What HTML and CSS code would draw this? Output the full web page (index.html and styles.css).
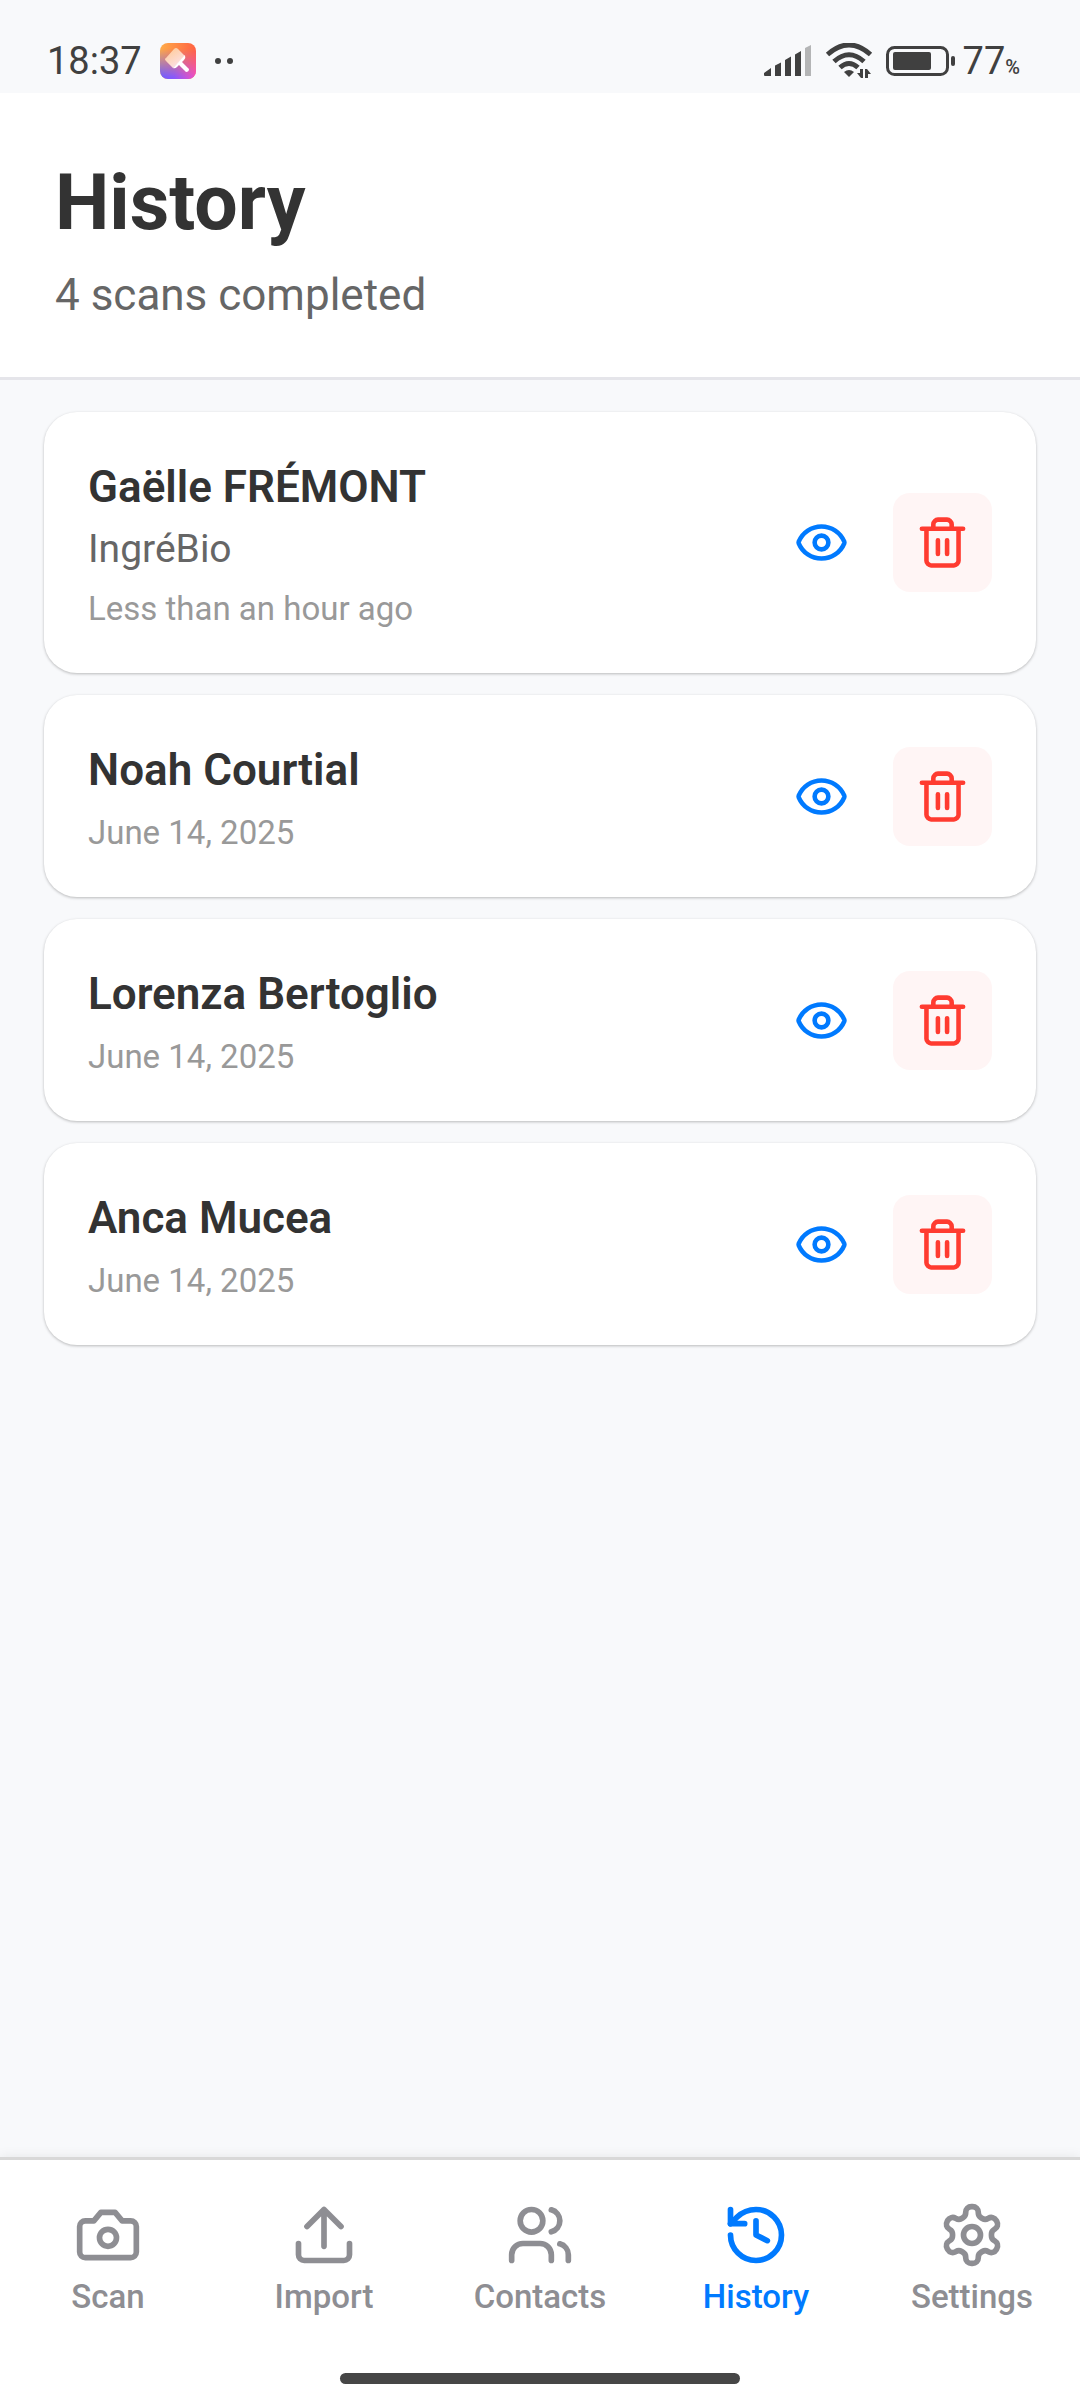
FILE: index.html
```html
<!DOCTYPE html>
<html lang="en">
<head>
    <meta charset="UTF-8">
    <meta name="viewport" content="width=device-width, initial-scale=1.0">
    <title>History</title>
    <link rel="stylesheet" href="styles.css">
</head>
<body>
    <!-- shared icons -->
    <svg class="sprite" aria-hidden="true">
        <symbol id="eye" viewBox="0 0 24 24">
            <path d="M2.062 12.348a1 1 0 0 1 0-.696 10.75 10.75 0 0 1 19.876 0 1 1 0 0 1 0 .696 10.75 10.75 0 0 1-19.876 0"/>
            <circle cx="12" cy="12" r="3"/>
        </symbol>
        <symbol id="trash" viewBox="0 0 24 24">
            <path d="M3 6h18M19 6v14c0 1-1 2-2 2H7c-1 0-2-1-2-2V6M8 6V4c0-1 1-2 2-2h4c1 0 2 1 2 2v2M10 11v6M14 11v6"/>
        </symbol>
    </svg>

    <div class="status-bar">
        <div class="status-left">
            <span>18:37</span>
            <svg class="app-badge" viewBox="0 0 36 36">
                <defs>
                    <linearGradient id="badgeTop" x1="0" y1="0" x2="1" y2="0">
                        <stop offset="0" stop-color="#ffac48"/>
                        <stop offset="1" stop-color="#ff6242"/>
                    </linearGradient>
                    <linearGradient id="badgeBottom" x1="0" y1="0" x2="1" y2="0">
                        <stop offset="0" stop-color="#6f5cff"/>
                        <stop offset="0.4" stop-color="#8a58fa"/>
                        <stop offset="1" stop-color="#f24fc4"/>
                    </linearGradient>
                    <linearGradient id="badgeFade" x1="0" y1="0" x2="0" y2="1">
                        <stop offset="0.15" stop-color="#000"/>
                        <stop offset="0.95" stop-color="#fff"/>
                    </linearGradient>
                    <linearGradient id="brush" x1="0.2" y1="0" x2="0.8" y2="1">
                        <stop offset="0" stop-color="#ffcb98"/>
                        <stop offset="1" stop-color="#fbe3f0"/>
                    </linearGradient>
                    <mask id="badgeMask">
                        <rect width="36" height="36" fill="url(#badgeFade)"/>
                    </mask>
                </defs>
                <rect width="36" height="36" rx="8" fill="url(#badgeTop)"/>
                <rect width="36" height="36" rx="8" fill="url(#badgeBottom)" mask="url(#badgeMask)"/>
                <path d="M6 15L14 6Q16 4 18 6L25 13L13 25L6 18Q4 16 6 15Z" fill="url(#brush)"/>
                <path d="M13 25L25 12Q26 15 24 17L22 19L29 26Q29 29 26 29L19 22L17 24Q15 26 13 25Z" fill="#fff"/>
            </svg>
            <svg class="dots" viewBox="0 0 20 8">
                <circle cx="4" cy="4" r="3"/>
                <circle cx="16" cy="4" r="3"/>
            </svg>
        </div>
        <div class="status-right">
            <svg class="signal" viewBox="0 0 48 32">
                <path d="M0 28L7 23V31H1Q0 31 0 30ZM11 20.500L17 17.500V31H11ZM21 15L27 11.500V31H21ZM31 9.500L37 6V31H31Z"/>
                <path class="signal-off" d="M41 3L47 0V31H41Z"/>
            </svg>
            <svg class="wifi" viewBox="0 0 48 36">
                <path class="arc" d="M2.500 11.500Q24 -7.500 45.500 11.500"/>
                <path class="arc" d="M9 18.500Q24 5 39 18.500"/>
                <path class="arc" d="M15 24.500Q24 16.500 33 24.500"/>
                <path d="M19 29Q24 25 29 29L24 34Z"/>
                <path d="M32 30H35V26H38V35H36ZM40 35V26H42L46 31H43V35Z"/>
            </svg>
            <svg class="battery" viewBox="0 0 70 30">
                <rect class="battery-shell" x="1.500" y="1.500" width="60" height="27" rx="7"/>
                <rect x="7" y="6" width="38" height="18" rx="2"/>
                <rect x="65" y="10" width="4" height="10" rx="2"/>
            </svg>
            <span>77<small>%</small></span>
        </div>
    </div>

    <header class="header">
        <h1>History</h1>
        <p>4 scans completed</p>
    </header>

    <main class="list">
        <article class="card">
            <div class="info">
                <h2>Gaëlle FRÉMONT</h2>
                <p class="company">IngréBio</p>
                <p class="date">Less than an hour ago</p>
            </div>
            <button type="button" class="action view" aria-label="View Gaëlle FRÉMONT"><svg><use href="#eye"/></svg></button>
            <button type="button" class="action delete" aria-label="Delete Gaëlle FRÉMONT"><svg><use href="#trash"/></svg></button>
        </article>

        <article class="card">
            <div class="info">
                <h2>Noah Courtial</h2>
                <p class="date">June 14, 2025</p>
            </div>
            <button type="button" class="action view" aria-label="View Noah Courtial"><svg><use href="#eye"/></svg></button>
            <button type="button" class="action delete" aria-label="Delete Noah Courtial"><svg><use href="#trash"/></svg></button>
        </article>

        <article class="card">
            <div class="info">
                <h2>Lorenza Bertoglio</h2>
                <p class="date">June 14, 2025</p>
            </div>
            <button type="button" class="action view" aria-label="View Lorenza Bertoglio"><svg><use href="#eye"/></svg></button>
            <button type="button" class="action delete" aria-label="Delete Lorenza Bertoglio"><svg><use href="#trash"/></svg></button>
        </article>

        <article class="card">
            <div class="info">
                <h2>Anca Mucea</h2>
                <p class="date">June 14, 2025</p>
            </div>
            <button type="button" class="action view" aria-label="View Anca Mucea"><svg><use href="#eye"/></svg></button>
            <button type="button" class="action delete" aria-label="Delete Anca Mucea"><svg><use href="#trash"/></svg></button>
        </article>
    </main>

    <footer class="bottom">
        <nav class="tabs">
            <a href="#scan" class="tab">
                <svg viewBox="0 0 24 24">
                    <path d="M14.5 4h-5L7 7H4a2 2 0 0 0-2 2v9a2 2 0 0 0 2 2h16a2 2 0 0 0 2-2V9a2 2 0 0 0-2-2h-3l-2.500-3z"/>
                    <circle cx="12" cy="13" r="3"/>
                </svg>
                <span>Scan</span>
            </a>
            <a href="#import" class="tab">
                <svg viewBox="0 0 24 24">
                    <path d="M21 15v4a2 2 0 0 1-2 2H5a2 2 0 0 1-2-2v-4M18 9l-6-6-6 6M12 3v13"/>
                </svg>
                <span>Import</span>
            </a>
            <a href="#contacts" class="tab">
                <svg viewBox="0 0 24 24">
                    <path d="M16 21v-2a4 4 0 0 0-4-4H6a4 4 0 0 0-4 4v2"/>
                    <circle cx="9" cy="7" r="4"/>
                    <path d="M22 21v-2a4 4 0 0 0-3-3.870M16 3.130a4 4 0 0 1 0 7.750"/>
                </svg>
                <span>Contacts</span>
            </a>
            <a href="#history" class="tab active" aria-current="page">
                <svg viewBox="0 0 24 24">
                    <path d="M3 12a9 9 0 1 0 9-9 9.750 9.750 0 0 0-6.740 2.740L3 8"/>
                    <path d="M3 3v5h5M12 7v5l4 2"/>
                </svg>
                <span>History</span>
            </a>
            <a href="#settings" class="tab">
                <svg viewBox="0 0 24 24">
                    <path d="M12.22 2h-.44a2 2 0 0 0-2 2v.18a2 2 0 0 1-1 1.73l-.43.25a2 2 0 0 1-2 0l-.15-.08a2 2 0 0 0-2.73.73l-.22.38a2 2 0 0 0 .73 2.73l.15.1a2 2 0 0 1 1 1.72v.51a2 2 0 0 1-1 1.74l-.15.09a2 2 0 0 0-.73 2.73l.22.38a2 2 0 0 0 2.73.73l.15-.08a2 2 0 0 1 2 0l.43.25a2 2 0 0 1 1 1.73V20a2 2 0 0 0 2 2h.44a2 2 0 0 0 2-2v-.18a2 2 0 0 1 1-1.73l.43-.25a2 2 0 0 1 2 0l.15.08a2 2 0 0 0 2.73-.73l.22-.39a2 2 0 0 0-.73-2.73l-.15-.08a2 2 0 0 1-1-1.74v-.5a2 2 0 0 1 1-1.74l.15-.09a2 2 0 0 0 .73-2.73l-.22-.38a2 2 0 0 0-2.73-.73l-.15.08a2 2 0 0 1-2 0l-.43-.25a2 2 0 0 1-1-1.73V4a2 2 0 0 0-2-2z"/>
                    <circle cx="12" cy="12" r="3"/>
                </svg>
                <span>Settings</span>
            </a>
        </nav>
        <div class="home-indicator"></div>
    </footer>
</body>
</html>
```
FILE: styles.css
```css
* {
    box-sizing: border-box;
}
body {
    margin: 0;
    min-height: 100vh;
    display: flex;
    flex-direction: column;
    background-color: #f8f9fb;
    color: #333;
    font-family: Roboto, sans-serif;
}
h1, h2, p {
    margin: 0;
}
svg {
    display: block;
    flex-shrink: 0;
}
.sprite {
    display: none;
}

/* status bar */
.status-bar {
    display: flex;
    justify-content: space-between;
    padding: 39px 60px 10px 47px;
    color: #404040;
    font-size: 38px;
    line-height: 44px;
}
.status-bar svg {
    fill: #404040;
}
.status-left, .status-right {
    display: flex;
    align-items: center;
}
.status-left {
    gap: 18px;
}
.status-right {
    gap: 13px;
}
.app-badge {
    width: 36px;
    height: 36px;
}
.dots {
    width: 20px;
    height: 8px;
}
.signal {
    width: 48px;
    height: 32px;
}
.status-bar .signal-off {
    fill: #b4b5b6;
}
.wifi {
    width: 48px;
    height: 36px;
}
.arc {
    fill: none;
    stroke: #404040;
    stroke-width: 5;
}
.battery {
    width: 70px;
    height: 30px;
}
.status-bar .battery-shell {
    fill: none;
    stroke: #404040;
    stroke-width: 3;
}
.status-right span {
    margin-left: -6px;
}
.status-right small {
    font-size: 20px;
    font-weight: 500;
    line-height: 20px;
}

/* header */
.header {
    padding: 58px 55px 52px;
    background-color: #fff;
    border-bottom: 3px solid #e5e5ea;
}
.header h1 {
    margin-bottom: 11px;
    font-size: 77px;
    line-height: 104px;
}
.header p {
    color: #666;
    font-size: 44px;
    line-height: 59px;
}

/* scan list */
.list {
    flex: 1;
    display: flex;
    flex-direction: column;
    gap: 22px;
    padding: 32px 44px;
}
.card {
    display: flex;
    align-items: center;
    gap: 22px;
    padding: 44px;
    background-color: #fff;
    border-radius: 33px;
    box-shadow: 0 1px 3px rgba(0, 0, 0, 0.26);
}
.info {
    flex: 1;
}
.info h2 {
    margin-bottom: 6px;
    font-size: 44px;
    font-weight: 600;
    line-height: 63px;
}
.company {
    margin-bottom: 11px;
    color: #666;
    font-size: 39px;
    line-height: 48px;
}
.date {
    padding-top: 5px;
    color: #999;
    font-size: 33px;
    line-height: 40px;
}
.action {
    display: flex;
    align-items: center;
    justify-content: center;
    width: 99px;
    height: 99px;
    padding: 0;
    border: none;
    border-radius: 17px;
    background-color: transparent;
    cursor: pointer;
}
.action svg {
    width: 55px;
    height: 55px;
}
.action svg, .tab svg {
    fill: none;
    stroke: currentColor;
    stroke-width: 2;
    stroke-linecap: round;
    stroke-linejoin: round;
}
.view {
    color: #007aff;
}
.delete {
    background-color: #fff5f5;
    color: #ff3b30;
}

/* bottom navigation */
.bottom {
    padding-bottom: 16px;
    background-color: #fff;
    border-top: 3px solid #d8d8d8;
    box-shadow: 0 0 12px rgba(0, 0, 0, 0.08);
}
.tabs {
    display: flex;
    padding: 41px 0 56px;
}
.tab {
    flex: 1;
    display: flex;
    flex-direction: column;
    align-items: center;
    gap: 8px;
    color: #8e8e93;
    font-size: 33px;
    font-weight: 500;
    line-height: 40px;
    text-decoration: none;
}
.tab svg {
    width: 68px;
    height: 68px;
}
.active {
    color: #007aff;
}
.home-indicator {
    width: 37%;
    height: 11px;
    margin: 0 auto;
    border-radius: 6px;
    background-color: #464646;
}
```
